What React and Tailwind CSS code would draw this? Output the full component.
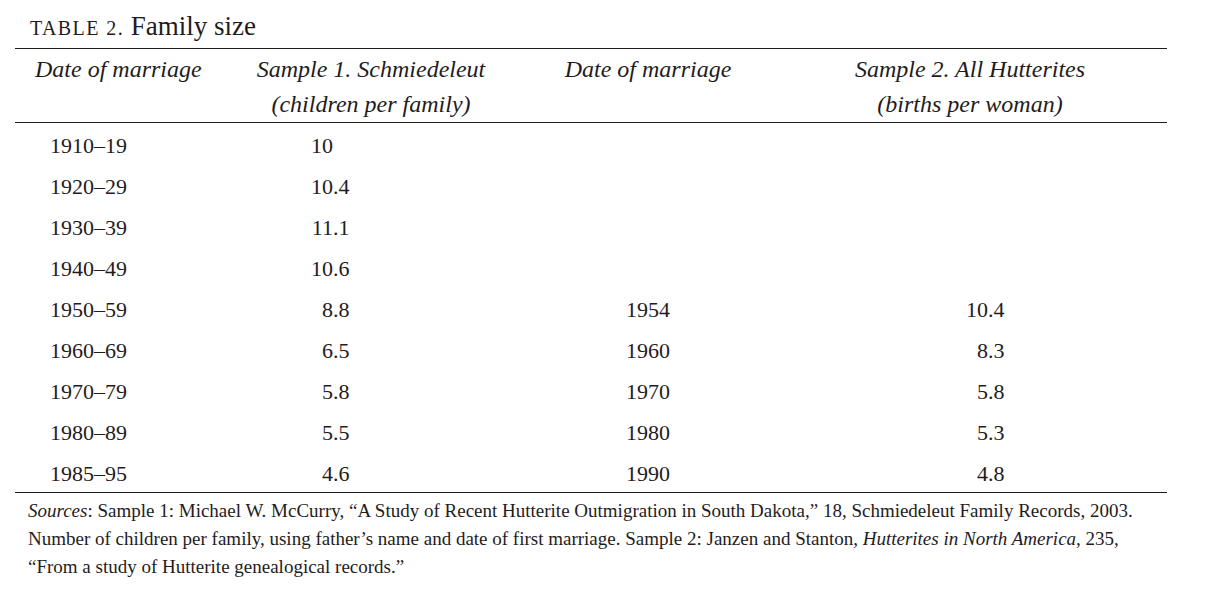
import React from "react";

const rows = [
  { period: "1910–19", s1: "10" },
  { period: "1920–29", s1: "10.4" },
  { period: "1930–39", s1: "11.1" },
  { period: "1940–49", s1: "10.6" },
  { period: "1950–59", s1: "8.8", year: "1954", s2: "10.4" },
  { period: "1960–69", s1: "6.5", year: "1960", s2: "8.3" },
  { period: "1970–79", s1: "5.8", year: "1970", s2: "5.8" },
  { period: "1980–89", s1: "5.5", year: "1980", s2: "5.3" },
  { period: "1985–95", s1: "4.6", year: "1990", s2: "4.8" },
];

// splits "10.4" into "10" and ".4" so the points line up
const Decimal = ({ value, intWidth }) => {
  if (!value) return null;
  const [whole, frac] = value.split(".");
  return (
    <div className="flex">
      <span className={`${intWidth} text-right`}>{whole}</span>
      {frac && <span>.{frac}</span>}
    </div>
  );
};

const App = () => {
  return (
    <div className="w-[1205px] h-[600px] bg-white text-[#1f1c1d] font-['Liberation_Serif',serif]">
      {/* title */}
      <div className="h-[48px] pt-[13px] pl-[30px] text-[27px] leading-[27px]">
        <span className="text-[20px] tracking-[0.07em]">TABLE 2.</span> Family size
      </div>

      <div className="ml-[15px] w-[1152px]">
        {/* header */}
        <div className="grid grid-cols-[235px_242px_312px_332px_1fr] border-t border-b border-[#1f1c1d] pt-[8px] pb-[6px] text-[24px] leading-[24px] italic">
          <div className="pl-[20px]">Date of marriage</div>
          <div className="flex flex-col items-center gap-[11px]">
            <div>Sample 1. Schmiedeleut</div>
            <div>(children per family)</div>
          </div>
          <div className="text-center">Date of marriage</div>
          <div className="flex flex-col items-center gap-[11px]">
            <div>Sample 2. All Hutterites</div>
            <div>(births per woman)</div>
          </div>
          <div />
        </div>

        {/* body */}
        <div className="h-[370px] pt-[2px] border-b border-[#1f1c1d] text-[22px] leading-[41px]">
          {rows.map((r) => (
            <div key={r.period} className="grid grid-cols-[235px_242px_312px_332px_1fr]">
              <div className="pl-[35px]">{r.period}</div>
              <Decimal value={r.s1} intWidth="w-[83px]" />
              <div className="text-center">{r.year}</div>
              <Decimal value={r.s2} intWidth="w-[184px]" />
              <div />
            </div>
          ))}
        </div>

        {/* sources */}
        <div className="pt-[4px] pl-[13px] text-[19px] leading-[28px]">
          <i>Sources</i>: Sample 1: Michael W. McCurry, “A Study of Recent Hutterite Outmigration in South Dakota,” 18, Schmiedeleut Family Records, 2003.
          <br />
          Number of children per family, using father’s name and date of first marriage. Sample 2: Janzen and Stanton, <i>Hutterites in North America</i>, 235,
          <br />
          “From a study of Hutterite genealogical records.”
        </div>
      </div>
    </div>
  );
};

export default App;
